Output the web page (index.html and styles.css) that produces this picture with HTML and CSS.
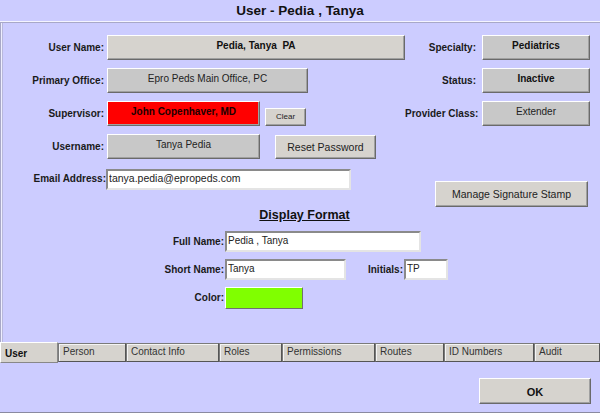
FILE: index.html
```html
<!DOCTYPE html>
<html>
<head lang="en">
    <meta charset="utf-8">
    <title>User - Pedia , Tanya</title>
    <link rel="stylesheet" href="styles.css">
</head>
<body>
<div class="title">User - Pedia , Tanya</div>
<div class="panel">
    <div class="form">
        <div class="label">User Name:</div>
        <div class="btn light wide bold">Pedia, Tanya&nbsp;&nbsp;PA</div>
        <div class="label">Specialty:</div>
        <div class="btn bold">Pediatrics</div>

        <div class="label">Primary Office:</div>
        <div class="cell"><div class="btn office">Epro Peds Main Office, PC</div></div>
        <div class="label">Status:</div>
        <div class="btn bold">Inactive</div>

        <div class="label">Supervisor:</div>
        <div class="cell">
            <div class="btn red bold">John Copenhaver, MD</div>
            <div class="btn light clear">Clear</div>
        </div>
        <div class="label">Provider Class:</div>
        <div class="btn">Extender</div>

        <div class="label">Username:</div>
        <div class="cell">
            <div class="btn short">Tanya Pedia</div>
            <div class="btn light reset">Reset Password</div>
        </div>
        <div class="label"></div>
        <div></div>

        <div class="label email-label">Email Address:</div>
        <div class="cell"><input class="field email" value="tanya.pedia@epropeds.com"></div>
        <div class="stamp-cell"><div class="btn light stamp">Manage Signature Stamp</div></div>
    </div>

    <div class="heading"><span>Display Format</span></div>

    <div class="display">
        <div class="label">Full Name:</div>
        <div class="cell"><input class="field full" value="Pedia , Tanya"></div>

        <div class="label">Short Name:</div>
        <div class="cell">
            <input class="field shortname" value="Tanya">
            <div class="label initials">Initials:</div>
            <input class="field init" value="TP">
        </div>

        <div class="label">Color:</div>
        <div class="cell"><div class="swatch"></div></div>
    </div>
</div>
<div class="tabs">
    <div class="tab active">User</div>
    <div class="tab w68">Person</div>
    <div class="tab w92">Contact Info</div>
    <div class="tab w63">Roles</div>
    <div class="tab w93">Permissions</div>
    <div class="tab w69">Routes</div>
    <div class="tab w90">ID Numbers</div>
    <div class="tab w66">Audit</div>
</div>
<div class="footer">
    <div class="btn light ok bold">OK</div>
</div>
</body>
</html>
```

FILE: styles.css
```css
html, body {
    margin: 0;
    padding: 0;
}

body {
    width: 600px;
    height: 413px;
    overflow: hidden;
    background: #ccccff;
    font-family: "Liberation Sans", Arial, sans-serif;
    font-size: 10px;
    color: #000;
}

.title {
    height: 21px;
    line-height: 21px;
    text-align: center;
    font-size: 13.5px;
    font-weight: bold;
    color: #111;
    border-bottom: 1px solid #f4f4ff;
}

.panel {
    box-sizing: border-box;
    height: 321px;
    border-top: 1px solid #a8a8c8;
    border-left: 1px solid #a8a8c8;
    box-shadow: inset 1px 0 0 #eeeeff, inset 2px 0 0 #b8b8dc;
    padding-top: 12px;
}

.form {
    display: grid;
    grid-template-columns: 106px 298px 77px 108px;
    grid-template-rows: 25px 25px 25px 25px auto;
    row-gap: 8px;
}

.label {
    font-weight: bold;
    font-size: 10px;
    color: #1a1a1a;
    text-align: right;
    padding-right: 3px;
    align-self: center;
    white-space: nowrap;
}

.form .label:nth-child(4n+3) {
    padding-right: 6px;
}

.cell {
    display: flex;
    align-items: center;
}

.btn {
    box-sizing: border-box;
    height: 25px;
    padding-top: 4px;
    text-align: center;
    font-size: 10px;
    color: #222;
    background: #c8c8c8;
    border: 1px solid;
    border-color: #ffffff #6a6a6a #6a6a6a #ffffff;
    box-shadow: inset -1px -1px 0 #a0a0a0;
    white-space: nowrap;
}

.btn.light {
    background: #d6d3ce;
}

.bold {
    font-weight: bold;
    color: #111;
}

.btn.wide {
    width: 298px;
}

.btn.office {
    width: 201px;
}

.btn.red {
    width: 153px;
    background: #ff0000;
    color: #200000;
}

.btn.clear {
    width: 41px;
    height: 18px;
    margin-left: 5px;
    margin-top: 6px;
    padding-top: 3px;
    font-size: 8px;
}

.btn.short {
    width: 153px;
}

.btn.reset {
    width: 101px;
    height: 24px;
    margin-left: 15px;
    padding-top: 5px;
    font-size: 10.5px;
}

.email-label {
    align-self: start;
    margin-top: 6px;
    padding-right: 1px;
}

.form .email-label {
    padding-right: 1px;
}

.form .cell:nth-last-child(2) {
    align-self: start;
    margin-left: -1px;
    margin-top: 2px;
}

.stamp-cell {
    grid-column: 3 / span 2;
    display: flex;
    justify-content: flex-end;
    padding-right: 2px;
    margin-top: 14px;
}

.btn.stamp {
    width: 153px;
    height: 26px;
    padding-top: 6px;
    font-size: 10.5px;
}

.field {
    box-sizing: border-box;
    height: 21px;
    margin: 0;
    padding: 0 0 3px 1px;
    background: #fff;
    border: 2px solid;
    border-color: #8a8a8a #e4e4e4 #e4e4e4 #8a8a8a;
    font-family: "Liberation Sans", Arial, sans-serif;
    font-size: 10px;
    color: #222;
    outline: none;
}

.field.email {
    width: 245px;
    font-size: 10.5px;
}

.heading {
    height: 16px;
    line-height: 16px;
    text-align: center;
    padding-left: 8px;
    font-size: 12.5px;
    font-weight: bold;
    color: #111;
}

.heading span {
    text-decoration: underline;
}

.display {
    display: grid;
    grid-template-columns: 224px 250px;
    grid-template-rows: 21px 21px 21px;
    row-gap: 7px;
    margin-top: 8px;
}

.display .label {
    padding-right: 1px;
}

.field.full {
    width: 196px;
}

.field.shortname {
    width: 121px;
}

.label.initials {
    width: 58px;
    padding-right: 1px;
    box-sizing: border-box;
}

.field.init {
    width: 44px;
}

.swatch {
    box-sizing: border-box;
    width: 78px;
    height: 22px;
    margin-top: 1px;
    background: #80ff00;
    border: 1px solid;
    border-color: #ffffff #707070 #707070 #ffffff;
}

.tabs {
    display: flex;
    height: 20px;
}

.tab {
    box-sizing: border-box;
    height: 19px;
    padding: 2px 0 0 4px;
    font-size: 10px;
    color: #333;
    background: #d6d3ce;
    border: 1px solid;
    border-color: #7a7a7a #555 #555 #7a7a7a;
    box-shadow: inset 1px 1px 0 #f4f4f4;
}

.tab.active {
    width: 58px;
    height: 21px;
    margin-top: -1px;
    padding: 5px 0 0 4px;
    font-weight: bold;
    color: #111;
    border-color: #ffffff #888 #888 #ffffff;
    box-shadow: none;
}

.w68 { width: 68px; }
.w92 { width: 93px; }
.w63 { width: 63px; }
.w93 { width: 93px; }
.w69 { width: 69px; }
.w90 { width: 90px; }
.w66 { width: 66px; }

.footer {
    box-sizing: border-box;
    height: 50px;
    display: flex;
    justify-content: flex-end;
    padding: 15px 9px 0 0;
    border-bottom: 1px solid #8a8aa0;
}

.btn.ok {
    width: 112px;
    height: 26px;
    padding-top: 7px;
    font-size: 11px;
}
```
